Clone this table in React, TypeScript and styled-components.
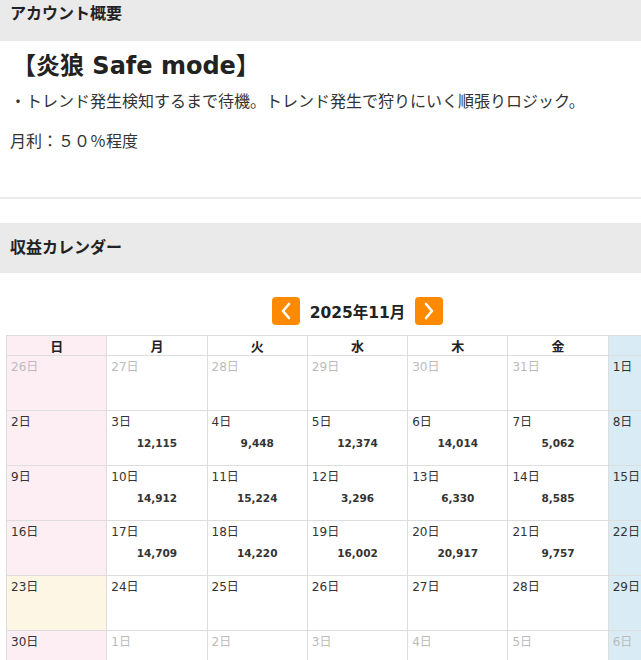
import styled, { createGlobalStyle } from 'styled-components'

const GlobalStyle = createGlobalStyle`
  html, body {
    margin: 0;
    padding: 0;
    background: #fff;
    overflow-x: hidden;
  }
  body {
    font-family: 'DejaVu Sans', 'Noto Sans CJK JP', sans-serif;
    color: #333;
  }
`

const Page = styled.div`
  width: 715px;
`

const SectionBar = styled.div<{ $tall?: boolean }>`
  background: #eaeaea;
  height: ${(p) => (p.$tall ? '50px' : '41px')};
  padding: ${(p) => (p.$tall ? '0 10px' : '2px 10px 0')};
  box-sizing: border-box;
  display: flex;
  align-items: ${(p) => (p.$tall ? 'center' : 'flex-start')};
  font-size: 16px;
  font-weight: bold;
  color: #222;
  line-height: 24px;
`

const Summary = styled.div`
  padding: 10px 10px 43px;
  border-bottom: 2px solid #eaeaea;
  margin-bottom: 24px;
`

const Title = styled.div`
  font-size: 24px;
  font-weight: bold;
  line-height: 30px;
  color: #222;
  padding-left: 2px;
`

const Line = styled.p<{ $gap: number }>`
  margin: ${(p) => p.$gap}px 0 0;
  font-size: 16px;
  line-height: 24px;
  color: #333;
`

const CalendarWrap = styled.div`
  padding: 24px 6px 0;
`

const Nav = styled.div`
  display: flex;
  align-items: center;
  justify-content: center;
  gap: 10px;
  height: 28px;
  margin-bottom: 10px;
`

const NavButton = styled.button`
  width: 28px;
  height: 28px;
  border: none;
  border-radius: 4px;
  background: #ff8a00;
  padding: 0;
  display: flex;
  align-items: center;
  justify-content: center;
  cursor: pointer;
`

const MonthTitle = styled.div`
  font-size: 15.5px;
  font-weight: bold;
  color: #222;
`

const Table = styled.table`
  width: 703px;
  table-layout: fixed;
  border-collapse: collapse;
`

type Tone = 'sun' | 'sat' | 'holiday' | undefined

const bgFor = (t: Tone) =>
  t === 'sun' ? '#fdeef3' : t === 'sat' ? '#d9ebf5' : t === 'holiday' ? '#fdf6e4' : '#fff'

const HeadCell = styled.th<{ $tone?: Tone }>`
  border: 1px solid #ddd;
  height: 19px;
  padding: 0;
  font-size: 13px;
  font-weight: bold;
  color: #222;
  text-align: center;
  background: ${(p) => bgFor(p.$tone)};
`

const DayCell = styled.td<{ $tone?: Tone }>`
  border: 1px solid #ddd;
  height: 55px;
  padding: 3px 4px 0;
  vertical-align: top;
  box-sizing: border-box;
  background: ${(p) => bgFor(p.$tone)};
`

const DayLabel = styled.div<{ $muted?: boolean }>`
  font-size: 12px;
  line-height: 16px;
  color: ${(p) => (p.$muted ? '#bbb' : '#333')};
`

const Amount = styled.div`
  margin-top: 6px;
  font-size: 10.5px;
  font-weight: bold;
  line-height: 14px;
  text-align: center;
  color: #333;
`

const Chevron = ({ dir }: { dir: 'left' | 'right' }) => (
  <svg width="12" height="18" viewBox="0 0 12 18">
    <path
      d={dir === 'left' ? 'M9 2 L3 9 L9 16' : 'M3 2 L9 9 L3 16'}
      fill="none"
      stroke="#fff"
      strokeWidth="2.6"
      strokeLinecap="round"
      strokeLinejoin="round"
    />
  </svg>
)

type Day = { d: number; muted?: boolean; amount?: string; holiday?: boolean }

const weeks: Day[][] = [
  [{ d: 26, muted: true }, { d: 27, muted: true }, { d: 28, muted: true }, { d: 29, muted: true }, { d: 30, muted: true }, { d: 31, muted: true }, { d: 1 }],
  [{ d: 2 }, { d: 3, amount: '12,115' }, { d: 4, amount: '9,448' }, { d: 5, amount: '12,374' }, { d: 6, amount: '14,014' }, { d: 7, amount: '5,062' }, { d: 8 }],
  [{ d: 9 }, { d: 10, amount: '14,912' }, { d: 11, amount: '15,224' }, { d: 12, amount: '3,296' }, { d: 13, amount: '6,330' }, { d: 14, amount: '8,585' }, { d: 15 }],
  [{ d: 16 }, { d: 17, amount: '14,709' }, { d: 18, amount: '14,220' }, { d: 19, amount: '16,002' }, { d: 20, amount: '20,917' }, { d: 21, amount: '9,757' }, { d: 22 }],
  [{ d: 23, holiday: true }, { d: 24 }, { d: 25 }, { d: 26 }, { d: 27 }, { d: 28 }, { d: 29 }],
  [{ d: 30 }, { d: 1, muted: true }, { d: 2, muted: true }, { d: 3, muted: true }, { d: 4, muted: true }, { d: 5, muted: true }, { d: 6, muted: true }],
]

const weekdays = ['日', '月', '火', '水', '木', '金', '土']

const toneOf = (day: Day, i: number): Tone => {
  if (day.holiday) return 'holiday'
  if (i === 0) return 'sun'
  if (i === 6) return 'sat'
  return undefined
}

export default function App() {
  return (
    <Page>
      <GlobalStyle />
      <SectionBar>アカウント概要</SectionBar>
      <Summary>
        <Title>【炎狼 Safe mode】</Title>
        <Line $gap={9}>・トレンド発生検知するまで待機。トレンド発生で狩りにいく順張りロジック。</Line>
        <Line $gap={16}>月利：５０％程度</Line>
      </Summary>

      <SectionBar $tall>収益カレンダー</SectionBar>
      <CalendarWrap>
        <Nav>
          <NavButton aria-label="前の月">
            <Chevron dir="left" />
          </NavButton>
          <MonthTitle>2025年11月</MonthTitle>
          <NavButton aria-label="次の月">
            <Chevron dir="right" />
          </NavButton>
        </Nav>
        <Table>
          <thead>
            <tr>
              {weekdays.map((w, i) => (
                <HeadCell key={w} $tone={i === 0 ? 'sun' : i === 6 ? 'sat' : undefined}>
                  {w}
                </HeadCell>
              ))}
            </tr>
          </thead>
          <tbody>
            {weeks.map((week, wi) => (
              <tr key={wi}>
                {week.map((day, i) => (
                  <DayCell key={i} $tone={toneOf(day, i)}>
                    <DayLabel $muted={day.muted}>{day.d}日</DayLabel>
                    {day.amount && <Amount>{day.amount}</Amount>}
                  </DayCell>
                ))}
              </tr>
            ))}
          </tbody>
        </Table>
      </CalendarWrap>
    </Page>
  )
}
